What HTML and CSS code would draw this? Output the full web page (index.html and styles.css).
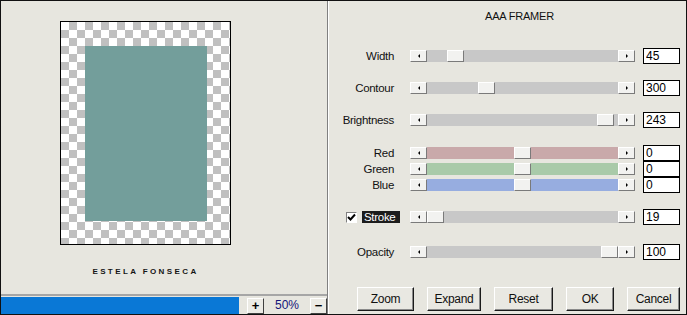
FILE: index.html
```html
<!DOCTYPE html>
<html lang="en">
<head>
  <meta charset="UTF-8">
  <title>AAA Framer</title>
  <link rel="stylesheet" href="styles.css">
</head>
<body>
  <div class="window">
    <div class="preview-pane">
      <div class="preview-area">
        <div class="preview">
          <div class="frame-fill"></div>
        </div>
        <div class="caption">ESTELA FONSECA</div>
      </div>
      <div class="statusbar">
        <div class="progress"></div>
        <button class="zoom-btn">+</button>
        <span class="zoom-value">50%</span>
        <button class="zoom-btn">&minus;</button>
      </div>
    </div>

    <div class="controls">
      <div class="title">AAA FRAMER</div>

      <div class="row row-width">
        <span class="label">Width</span>
        <div class="slider">
          <span class="arrow arrow-left"></span>
          <div class="track"><span class="thumb" style="margin-left:20px"></span></div>
          <span class="arrow arrow-right"></span>
        </div>
        <input class="value" type="text" value="45">
      </div>

      <div class="row gap16">
        <span class="label">Contour</span>
        <div class="slider">
          <span class="arrow arrow-left"></span>
          <div class="track"><span class="thumb" style="margin-left:51px"></span></div>
          <span class="arrow arrow-right"></span>
        </div>
        <input class="value" type="text" value="300">
      </div>

      <div class="row gap16">
        <span class="label">Brightness</span>
        <div class="slider">
          <span class="arrow arrow-left"></span>
          <div class="track"><span class="thumb" style="margin-left:170px"></span></div>
          <span class="arrow arrow-right"></span>
        </div>
        <input class="value" type="text" value="243">
      </div>

      <div class="rgb">
        <div class="row">
          <span class="label">Red</span>
          <div class="slider">
            <span class="arrow arrow-left"></span>
            <div class="track red"><span class="thumb" style="margin-left:87px"></span></div>
            <span class="arrow arrow-right"></span>
          </div>
          <input class="value" type="text" value="0">
        </div>
        <div class="row">
          <span class="label">Green</span>
          <div class="slider">
            <span class="arrow arrow-left"></span>
            <div class="track green"><span class="thumb" style="margin-left:87px"></span></div>
            <span class="arrow arrow-right"></span>
          </div>
          <input class="value" type="text" value="0">
        </div>
        <div class="row">
          <span class="label">Blue</span>
          <div class="slider">
            <span class="arrow arrow-left"></span>
            <div class="track blue"><span class="thumb" style="margin-left:87px"></span></div>
            <span class="arrow arrow-right"></span>
          </div>
          <input class="value" type="text" value="0">
        </div>
      </div>

      <div class="row gap16">
        <span class="label label-check">
          <span class="checkbox">
            <svg width="9" height="9" viewBox="0 0 9 9"><path d="M1 4 L3.5 6.5 L8 1.5" fill="none" stroke="#000" stroke-width="2"/></svg>
          </span>
          <span class="check-text">Stroke</span>
        </span>
        <div class="slider">
          <span class="arrow arrow-left"></span>
          <div class="track"><span class="thumb" style="margin-left:0px"></span></div>
          <span class="arrow arrow-right"></span>
        </div>
        <input class="value" type="text" value="19">
      </div>

      <div class="row gap19">
        <span class="label">Opacity</span>
        <div class="slider">
          <span class="arrow arrow-left"></span>
          <div class="track"><span class="thumb" style="margin-left:174px"></span></div>
          <span class="arrow arrow-right"></span>
        </div>
        <input class="value" type="text" value="100">
      </div>

      <div class="buttons">
        <button class="btn w57">Zoom</button>
        <button class="btn w54">Expand</button>
        <button class="btn w59">Reset</button>
        <button class="btn w48">OK</button>
        <button class="btn w53">Cancel</button>
      </div>
    </div>
  </div>
</body>
</html>
```

FILE: styles.css
```css
body {
  margin: 0;
  background: #e7e6df;
  font-family: "Liberation Sans", Arial, sans-serif;
}
.window {
  width: 687px;
  height: 315px;
  box-sizing: border-box;
  border: 1px solid #111;
  background: #e7e6df;
  display: flex;
}

/* left: preview */
.preview-pane {
  width: 326px;
  border-right: 1px solid #808080;
  display: flex;
  flex-direction: column;
}
.preview-area {
  flex: 1;
  padding-top: 20px;
  padding-left: 59px;
}
.preview {
  width: 171px;
  height: 224px;
  box-sizing: border-box;
  border: 1px solid #000;
  padding: 24px 23px 23px 24px;
  background-color: #fff;
  background-image: conic-gradient(#c0c0c0 25%, #fff 0 50%, #c0c0c0 0 75%, #fff 0);
  background-size: 16px 16px;
}
.frame-fill {
  width: 100%;
  height: 100%;
  background: #739e9b;
}
.caption {
  width: 171px;
  margin-top: 22px;
  text-align: center;
  font-size: 8px;
  line-height: 10px;
  font-weight: bold;
  letter-spacing: 2.4px;
  color: #151515;
}
.statusbar {
  height: 20px;
  box-sizing: border-box;
  border-top: 2px solid #a6a6a6;
  padding-top: 1px;
  display: flex;
  align-items: flex-start;
}
.progress {
  width: 238px;
  height: 17px;
  background: #0a78d6;
  margin-right: 8px;
}
.zoom-btn {
  width: 17px;
  height: 16px;
  margin: 1px 0 0 0;
  padding: 0;
  box-sizing: border-box;
  background: #ecebe5;
  border: 1px solid;
  border-color: #fff #404040 #404040 #fff;
  font-family: "Liberation Sans", Arial, sans-serif;
  font-size: 13px;
  font-weight: bold;
  line-height: 12px;
  color: #000;
}
.zoom-value {
  flex: 1;
  text-align: center;
  font-size: 12px;
  line-height: 17px;
  color: #14147a;
}

/* right: controls */
.controls {
  flex: 1;
  border-left: 1px solid #fff;
  display: flex;
  flex-direction: column;
}
.title {
  padding-top: 8px;
  padding-left: 24px;
  text-align: center;
  font-size: 11px;
  line-height: 14px;
  letter-spacing: -0.2px;
  color: #111;
}
.row {
  height: 16px;
  display: flex;
  align-items: center;
}
.row-width { margin-top: 25px; }
.gap16 { margin-top: 16px; }
.gap19 { margin-top: 19px; }
.rgb { margin-top: 17px; }
.label {
  width: 65px;
  margin-right: 16px;
  flex-shrink: 0;
  text-align: right;
  font-size: 11.5px;
  letter-spacing: -0.3px;
  color: #111;
}
.label-check {
  display: flex;
  align-items: center;
  text-align: left;
  padding-left: 17px;
  box-sizing: border-box;
  white-space: nowrap;
}
.checkbox {
  width: 11px;
  height: 11px;
  box-sizing: border-box;
  border: 1px solid;
  border-color: #808080 #fff #fff #808080;
  background: #fff;
  display: flex;
  align-items: center;
  justify-content: center;
  margin-right: 5px;
  flex-shrink: 0;
}
.check-text {
  background: #1c1c1c;
  color: #fff;
  line-height: 12px;
  padding: 0 5px 0 2px;
}
.slider {
  width: 225px;
  height: 12px;
  display: flex;
  flex-shrink: 0;
}
.arrow, .thumb {
  width: 17px;
  height: 12px;
  box-sizing: border-box;
  background: #f2f2f0;
  border: 1px solid;
  border-color: #fff #7a7a7a #7a7a7a #fff;
  flex-shrink: 0;
}
.arrow {
  display: flex;
  align-items: center;
  justify-content: center;
}
.thumb {
  display: block;
}
.arrow::after {
  content: "";
  width: 0;
  height: 0;
  border-top: 2px solid transparent;
  border-bottom: 2px solid transparent;
}
.arrow-left::after { border-right: 2px solid #000; }
.arrow-right::after { border-left: 2px solid #000; }
.track {
  flex: 1;
  display: flex;
  background: #c8c8c8;
}
.track.red { background: #c9a9aa; }
.track.green { background: #a9caa9; }
.track.blue { background: #97ade0; }
.value {
  width: 37px;
  height: 16px;
  margin: 0 0 0 8px;
  box-sizing: border-box;
  border: 1px solid #000;
  background: #fff;
  padding: 0 2px;
  font-family: "Liberation Sans", Arial, sans-serif;
  font-size: 12px;
  color: #000;
  outline: none;
}
.buttons {
  margin-top: 27px;
  padding: 0 6px 0 28px;
  display: flex;
  justify-content: space-between;
}
.btn {
  height: 24px;
  padding: 0;
  box-sizing: border-box;
  background: #e9e8e2;
  border: 1px solid;
  border-color: #fff #1a1a1a #1a1a1a #fff;
  box-shadow: inset -1px -1px #8a8a8a;
  font-family: "Liberation Sans", Arial, sans-serif;
  font-size: 12px;
  letter-spacing: -0.3px;
  color: #111;
}
.w57 { width: 57px; }
.w54 { width: 54px; }
.w59 { width: 59px; }
.w48 { width: 48px; }
.w53 { width: 53px; }
```
